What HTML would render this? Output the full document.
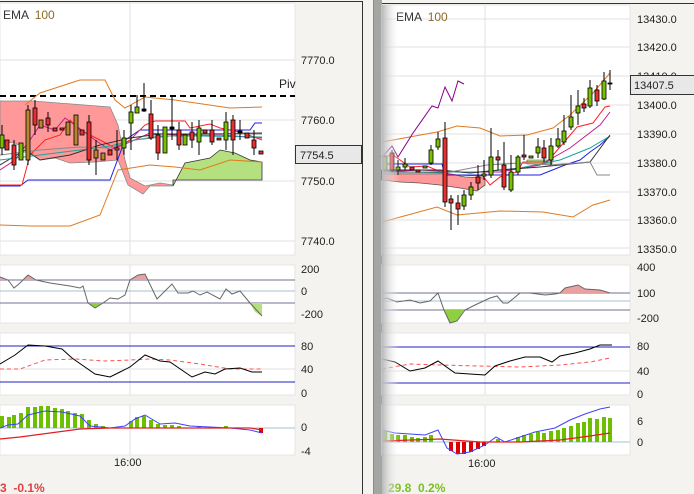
<!DOCTYPE html>
<html><head><meta charset="utf-8"><style>
html,body{margin:0;padding:0;width:694px;height:494px;overflow:hidden;background:#f4f3f0}
svg{display:block;font-family:"Liberation Sans",sans-serif}
</style></head><body>
<svg width="694" height="494" viewBox="0 0 694 494" xmlns="http://www.w3.org/2000/svg">
<defs>
<linearGradient id="sh" x1="0" x2="1" y1="0" y2="0">
<stop offset="0" stop-color="#b8b8b8"/><stop offset="1" stop-color="#ffffff" stop-opacity="0"/>
</linearGradient>
</defs>
<rect x="0" y="0" width="694" height="494" fill="#f4f3f0"/>
<!-- LEFT PANEL -->
<line x1="0" y1="1.5" x2="363" y2="1.5" stroke="#333"/>
<line x1="362.5" y1="1" x2="362.5" y2="494" stroke="#333"/>
<rect x="0" y="3" width="295" height="252" fill="#fff" stroke="#e4e4e4"/>
<g stroke="#e2e2e2"><line x1="0" y1="60" x2="295" y2="60"/><line x1="0" y1="120" x2="295" y2="120"/><line x1="0" y1="181" x2="295" y2="181"/><line x1="0" y1="241" x2="295" y2="241"/><line x1="130" y1="3" x2="130" y2="255"/></g>
<text x="3" y="19" font-size="12" fill="#333">EMA <tspan fill="#8a6a2a" dx="3">100</tspan></text>
<g font-size="11" fill="#222"><text x="301" y="64">7770.0</text><text x="301" y="124">7760.0</text><text x="301" y="185">7750.0</text><text x="301" y="245">7740.0</text><text x="279" y="88" font-size="12">Piv</text></g>
<rect x="295.5" y="145.5" width="66" height="18" fill="#e8e8e8" stroke="#333"/>
<text x="300" y="159" font-size="11" fill="#222">7754.5</text>
<!-- clouds -->
<polygon points="0,101 33,101 110,107 118,125 125,160 130,178 145,186 160,183 173,185 172,186 150,186 143,194 128,185 118,160 95,162 70,163 55,158 40,160 28,150 15,143 0,142" fill="#f99" stroke="#888" stroke-width="0.8"/>
<polygon points="173,186 185,163 210,158 220,150 235,153 250,160 262,162 262,180 173,180" fill="#b5e080" stroke="#333" stroke-width="0.8"/>
<line x1="0" y1="96" x2="295" y2="96" stroke="#000" stroke-width="2" stroke-dasharray="6,4"/>
<g fill="none" stroke-width="1">
<polyline stroke="#e07a20" points="25,105 40,93 80,80 105,80 115,100 125,108 145,97 175,100 230,108 262,107"/>
<polyline stroke="#e07a20" points="0,225 30,226 70,226 100,215 110,190 118,170 150,165 175,167 200,170 230,160 262,162"/>
<polyline stroke="#2020e0" points="0,186 20,186 28,180 110,180 125,140 140,130 250,130 255,123 262,123"/>
<polyline stroke="#ff2020" points="0,185 22,185 30,155 45,140 60,135 70,120 80,130 100,140 115,148 130,140 145,125 155,121 185,121 190,128 210,124 220,128 240,132 262,140"/>
<polyline stroke="#c02090" points="0,170 15,160 30,140 40,125 55,130 65,118 75,125 95,140 110,150 130,142 150,133 175,135 220,135 262,138"/>
<polyline stroke="#333" points="0,165 25,150 40,160 70,155 100,145 130,138 160,134 200,134 262,133"/>
<polyline stroke="#20a0a0" points="0,160 40,155 80,150 110,146 135,140 160,136 200,136 262,137"/>
<polyline stroke="#888" points="0,155 40,150 80,147 110,148 135,140 170,136 220,134 262,134"/>
</g>
<g stroke="#000" stroke-width="1">
<path d="M2,125V155M14,140V170M28,105V165M35,100V135M48,112V132M89,115V165M96,140V175M117,130V160M124,130V155M131,105V150M137,95V112M144,83V112M151,100V140M158,125V160M172,95V140M179,122V150M192,122V148M199,120V155M212,120V145M226,112V150M233,115V155M240,120V140M254,130V155"/>
</g>
<g stroke="#000" stroke-width="0.8">
<rect x="0" y="135" width="4" height="13" fill="#7ac000"/>
<rect x="5" y="140" width="4" height="10" fill="#e83030"/>
<rect x="12" y="145" width="4" height="20" fill="#e83030"/>
<rect x="19" y="143" width="4" height="17" fill="#7ac000"/>
<rect x="26" y="110" width="4" height="50" fill="#b8862c"/>
<rect x="33" y="108" width="4" height="17" fill="#e83030"/>
<rect x="39" y="120" width="4" height="8" fill="#b8862c"/>
<rect x="46" y="118" width="4" height="7" fill="#e83030"/>
<rect x="53" y="128" width="4" height="3" fill="#e83030"/>
<rect x="60" y="128" width="4" height="2" fill="#e83030"/>
<rect x="66" y="122" width="4" height="13" fill="#b8862c"/>
<rect x="74" y="115" width="4" height="30" fill="#b8862c"/>
<rect x="80" y="130" width="4" height="5" fill="#e83030"/>
<rect x="87" y="122" width="4" height="38" fill="#e83030"/>
<rect x="94" y="150" width="4" height="8" fill="#b8862c"/>
<rect x="101" y="153" width="4" height="7" fill="#b8862c"/>
<rect x="108" y="150" width="4" height="5" fill="#e83030"/>
<rect x="115" y="148" width="4" height="2" fill="#b8862c"/>
<rect x="122" y="138" width="4" height="10" fill="#7ac000"/>
<rect x="129" y="112" width="4" height="11" fill="#7ac000"/>
<rect x="135" y="107" width="4" height="6" fill="#7ac000"/>
<rect x="142" y="109" width="4" height="2" fill="#000"/>
<rect x="149" y="114" width="4" height="24" fill="#e83030"/>
<rect x="156" y="135" width="4" height="18" fill="#e83030"/>
<rect x="163" y="127" width="4" height="26" fill="#7ac000"/>
<rect x="170" y="127" width="4" height="2" fill="#000"/>
<rect x="177" y="130" width="4" height="15" fill="#e83030"/>
<rect x="183" y="135" width="4" height="10" fill="#7ac000"/>
<rect x="190" y="132" width="4" height="8" fill="#e83030"/>
<rect x="197" y="128" width="4" height="14" fill="#7ac000"/>
<rect x="203" y="130" width="4" height="3" fill="#e83030"/>
<rect x="210" y="130" width="4" height="12" fill="#e83030"/>
<rect x="217" y="138" width="4" height="2" fill="#e83030"/>
<rect x="224" y="122" width="4" height="18" fill="#7ac000"/>
<rect x="231" y="120" width="4" height="20" fill="#e83030"/>
<rect x="238" y="131" width="4" height="2" fill="#000"/>
<rect x="245" y="133" width="4" height="5" fill="#e83030"/>
<rect x="252" y="140" width="4" height="8" fill="#e83030"/>
<rect x="259" y="151" width="4" height="3" fill="#e83030"/>
</g>
<!-- left sub1 -->
<rect x="0" y="265" width="295" height="58" fill="#fff" stroke="#e4e4e4"/>
<line x1="130" y1="265" x2="130" y2="323" stroke="#e2e2e2"/>
<line x1="0" y1="280" x2="295" y2="280" stroke="#707090"/>
<line x1="0" y1="291" x2="295" y2="291" stroke="#a8c0d0"/>
<line x1="0" y1="303" x2="295" y2="303" stroke="#707090"/>
<polygon points="0,277 8,280 0,280" fill="#e8a0a0"/><polygon points="22,280 28,275 36,280" fill="#e8a0a0"/>
<polygon points="130,280 138,275 145,274 148,280" fill="#e8a0a0"/>
<polygon points="88,303 95,308 103,303" fill="#8fd040"/>
<polygon points="250,303 262,303 262,316 255,312" fill="#b5e080"/>
<polyline fill="none" stroke="#666" points="0,277 8,280 14,288 20,283 28,275 36,280 50,283 70,286 80,288 83,286 88,303 95,308 103,303 110,298 118,299 125,295 130,280 138,275 145,274 157,299 172,284 178,293 188,293 193,291 200,295 207,292 220,299 226,289 232,294 240,291 250,303 262,316"/>
<g font-size="11" fill="#222"><text x="301" y="273">200</text><text x="301" y="295">0</text><text x="301" y="318">-200</text></g>
<!-- left sub2 -->
<rect x="0" y="333" width="295" height="62" fill="#fff" stroke="#e4e4e4"/>
<line x1="130" y1="333" x2="130" y2="395" stroke="#e2e2e2"/>
<line x1="0" y1="369" x2="295" y2="369" stroke="#e0e0e0"/>
<line x1="0" y1="346" x2="295" y2="346" stroke="#2020c0"/>
<line x1="0" y1="382" x2="295" y2="382" stroke="#2020c0"/>
<polyline fill="none" stroke="#ff5050" stroke-dasharray="4,3" points="0,369 20,369 45,360 75,359 105,361 130,360 150,359 170,360 200,364 230,369 262,369"/>
<polyline fill="none" stroke="#000" points="0,364 10,358 15,355 28,345 45,346 62,349 72,358 95,374 110,377 120,372 130,367 145,355 160,361 170,362 192,377 205,372 215,374 225,369 240,368 252,372 262,372"/>
<g font-size="11" fill="#222"><text x="301" y="350">80</text><text x="301" y="373">40</text><text x="301" y="397">0</text></g>
<!-- left sub3 -->
<rect x="0" y="405" width="295" height="50" fill="#fff" stroke="#e4e4e4"/>
<line x1="130" y1="405" x2="130" y2="455" stroke="#e2e2e2"/>
<line x1="0" y1="428" x2="295" y2="428" stroke="#a8c0d0"/>
<g fill="#6cc000">
<rect x="0" y="416" width="4" height="12"/><rect x="7" y="417" width="4" height="11"/><rect x="12" y="415" width="4" height="13"/><rect x="19" y="413" width="4" height="15"/><rect x="26" y="407" width="4" height="21"/><rect x="33" y="407" width="4" height="21"/><rect x="39" y="406" width="4" height="22"/><rect x="46" y="406" width="4" height="22"/><rect x="53" y="408" width="4" height="20"/><rect x="60" y="409" width="4" height="19"/><rect x="66" y="411" width="4" height="17"/><rect x="73" y="413" width="4" height="15"/><rect x="80" y="414" width="4" height="14"/><rect x="87" y="420" width="4" height="8"/><rect x="94" y="424" width="4" height="4"/><rect x="101" y="426" width="4" height="2"/><rect x="129" y="421" width="4" height="7"/><rect x="135" y="417" width="4" height="11"/><rect x="142" y="416" width="4" height="12"/><rect x="149" y="420" width="4" height="8"/><rect x="156" y="424" width="4" height="4"/><rect x="163" y="425" width="4" height="3"/><rect x="170" y="425" width="4" height="3"/><rect x="177" y="426" width="4" height="2"/><rect x="197" y="426" width="4" height="2"/><rect x="224" y="426" width="4" height="2"/>
</g>
<rect x="259" y="428" width="4" height="5" fill="#d00"/>
<polyline fill="none" stroke="#4040ff" points="0,428 8,425 18,424 28,415 45,411 62,412 80,416 90,426 110,428 125,426 135,419 145,415 160,424 175,423 190,426 230,428 250,430 262,433"/>
<polyline fill="none" stroke="#e02020" stroke-width="1.2" points="0,439 20,437 50,433 80,429 110,428 200,428 250,428 262,430"/>
<g font-size="11" fill="#222"><text x="301" y="431">0</text><text x="301" y="455">-4</text><text x="114" y="466">16:00</text></g>
<text x="0" y="492" font-size="12" font-weight="bold" fill="#e04040">3 &#160;-0.1%</text>
<!-- middle strip -->
<rect x="373" y="0" width="9" height="494" fill="#a4a6a4"/>
<line x1="373.5" y1="0" x2="373.5" y2="494" stroke="#8a8c8a"/>
<!-- RIGHT PANEL -->
<line x1="382" y1="3.5" x2="694" y2="3.5" stroke="#333"/>
<rect x="382" y="5" width="248" height="250" fill="#fff" stroke="#e4e4e4"/>
<g stroke="#e2e2e2"><line x1="382" y1="19" x2="630" y2="19"/><line x1="382" y1="47" x2="630" y2="47"/><line x1="382" y1="76" x2="630" y2="76"/><line x1="382" y1="105" x2="630" y2="105"/><line x1="382" y1="134" x2="630" y2="134"/><line x1="382" y1="163" x2="630" y2="163"/><line x1="382" y1="192" x2="630" y2="192"/><line x1="382" y1="220" x2="630" y2="220"/><line x1="382" y1="248" x2="630" y2="248"/><line x1="485" y1="5" x2="485" y2="255"/></g>
<text x="396" y="21" font-size="12" fill="#333">EMA <tspan fill="#8a6a2a" dx="3">100</tspan></text>
<g font-size="11" fill="#222"><text x="637" y="23">13430.0</text><text x="637" y="51">13420.0</text><text x="637" y="80">13410.0</text><text x="637" y="109">13400.0</text><text x="637" y="138">13390.0</text><text x="637" y="167">13380.0</text><text x="637" y="196">13370.0</text><text x="637" y="224">13360.0</text><text x="637" y="253">13350.0</text></g>
<rect x="630.5" y="75.5" width="64" height="19" fill="#e8e8e8" stroke="#333"/>
<text x="634" y="89" font-size="11" fill="#222">13407.5</text>
<polygon points="382,170 410,172 445,173 465,177 485,178 485,185 477,191 460,188 440,185 420,183 400,182 382,180" fill="#f99" stroke="#555" stroke-width="0.8"/>
<polygon points="527,160 552,160 552,164 527,164" fill="#b5e080" stroke="#555" stroke-width="0.6"/>
<g fill="none" stroke-width="1">
<polyline stroke="#e07a20" points="382,142 437,132 457,126 480,128 500,136 527,135 553,128 570,115 593,93 610,73"/>
<polyline stroke="#e07a20" points="382,222 437,207 457,215 500,211 543,212 573,217 593,205 610,200"/>
<polyline stroke="#880088" points="382,157 392,146 398,157 413,133 432,106 438,108 445,87 452,101 458,81 464,84"/>
<polyline stroke="#ff2020" points="382,157 393,155 410,167 427,166 443,173 457,175 483,176 490,185 500,177 517,172 523,162 547,162 560,147 577,127 593,123 605,107 610,106"/>
<polyline stroke="#2020e0" points="382,164 442,164 445,175 540,175 565,165 580,160 590,152 600,145 610,136"/>
<polyline stroke="#c02090" points="382,172 420,170 460,172 500,172 540,165 570,148 600,125 610,112"/>
<polyline stroke="#20a0a0" points="382,172 430,172 480,172 520,168 560,160 590,148 610,136"/>
<polyline stroke="#333" points="382,170 440,170 470,173 500,170 540,167 570,164 590,162 610,135"/>
<polyline stroke="#888" points="382,174 440,174 487,165 520,163 550,165 590,162 597,175 610,175"/>
</g>
<g stroke="#000" stroke-width="1">
<path d="M385,155V172M392,150V172M398,160V175M405,158V170M431,145V165M438,132V150M445,122V207M451,195V230M458,195V225M464,190V210M471,182V200M478,165V190M484,160V180M491,128V178M498,150V170M504,142V190M511,155V192M518,155V175M524,135V160M538,138V158M544,140V162M551,138V165M558,128V148M564,115V145M571,95V130M578,90V125M584,98V112M590,80V108M597,85V106M604,72V100M610,70V90"/>
</g>
<g stroke="#000" stroke-width="0.8">
<rect x="383" y="157" width="4" height="13" fill="#7ac000"/><rect x="390" y="153" width="4" height="17" fill="#e83030"/><rect x="396" y="167" width="4" height="3" fill="#7ac000"/><rect x="403" y="164" width="4" height="3" fill="#7ac000"/><rect x="410" y="167" width="4" height="3" fill="#e83030"/><rect x="416" y="170" width="4" height="2" fill="#e83030"/><rect x="423" y="166" width="4" height="2" fill="#7ac000"/><rect x="429" y="150" width="4" height="13" fill="#7ac000"/><rect x="436" y="139" width="4" height="8" fill="#7ac000"/><rect x="443" y="138" width="4" height="64" fill="#e83030"/><rect x="449" y="199" width="4" height="4" fill="#e83030"/><rect x="456" y="203" width="4" height="6" fill="#e83030"/><rect x="462" y="195" width="4" height="11" fill="#7ac000"/><rect x="469" y="187" width="4" height="8" fill="#7ac000"/><rect x="476" y="177" width="4" height="6" fill="#e83030"/><rect x="482" y="174" width="4" height="2" fill="#7ac000"/><rect x="489" y="157" width="4" height="18" fill="#7ac000"/><rect x="496" y="157" width="4" height="3" fill="#e83030"/><rect x="502" y="165" width="4" height="22" fill="#e83030"/><rect x="509" y="172" width="4" height="18" fill="#7ac000"/><rect x="516" y="157" width="4" height="15" fill="#7ac000"/><rect x="522" y="155" width="4" height="2" fill="#e83030"/><rect x="529" y="156" width="4" height="2" fill="#7ac000"/><rect x="536" y="147" width="4" height="6" fill="#7ac000"/><rect x="542" y="148" width="4" height="10" fill="#e83030"/><rect x="549" y="146" width="4" height="14" fill="#7ac000"/><rect x="556" y="139" width="4" height="7" fill="#7ac000"/><rect x="562" y="131" width="4" height="11" fill="#7ac000"/><rect x="569" y="117" width="4" height="10" fill="#7ac000"/><rect x="576" y="106" width="4" height="7" fill="#7ac000"/><rect x="582" y="104" width="4" height="4" fill="#e83030"/><rect x="588" y="88" width="4" height="18" fill="#7ac000"/><rect x="595" y="90" width="4" height="11" fill="#e83030"/><rect x="602" y="81" width="4" height="18" fill="#7ac000"/><rect x="608" y="83" width="4" height="1" fill="#000"/>
</g>
<!-- right sub1 -->
<rect x="382" y="265" width="248" height="58" fill="#fff" stroke="#e4e4e4"/>
<line x1="485" y1="265" x2="485" y2="323" stroke="#e2e2e2"/>
<line x1="382" y1="293" x2="630" y2="293" stroke="#707090"/>
<line x1="382" y1="301" x2="630" y2="301" stroke="#a8c0d0"/>
<line x1="382" y1="310" x2="630" y2="310" stroke="#707090"/>
<polygon points="444,310 450,323 457,321 464,310" fill="#8fd040"/>
<polygon points="560,293 565,288 578,285 585,289 600,290 610,293" fill="#e8a0a0"/>
<polyline fill="none" stroke="#666" points="382,299 387,298 397,302 410,300 420,303 430,301 438,293 444,310 450,323 457,321 465,310 475,305 490,298 497,296 503,303 508,303 520,293 530,293 545,295 555,294 560,293 565,288 578,285 585,289 600,290 610,293"/>
<g font-size="11" fill="#222"><text x="637" y="271">400</text><text x="637" y="297">100</text><text x="637" y="322">-200</text></g>
<!-- right sub2 -->
<rect x="382" y="333" width="248" height="62" fill="#fff" stroke="#e4e4e4"/>
<line x1="485" y1="333" x2="485" y2="395" stroke="#e2e2e2"/>
<line x1="382" y1="371" x2="630" y2="371" stroke="#e0e0e0"/>
<line x1="382" y1="347" x2="630" y2="347" stroke="#2020c0"/>
<line x1="382" y1="383" x2="630" y2="383" stroke="#2020c0"/>
<polyline fill="none" stroke="#ff5050" stroke-dasharray="4,3" points="382,369 410,364 440,365 480,366 520,367 560,365 590,362 610,358"/>
<polyline fill="none" stroke="#000" points="382,359 395,362 410,371 425,368 438,361 455,373 470,374 485,375 495,366 510,361 525,357 540,357 552,362 560,356 575,353 590,349 600,345 612,345"/>
<g font-size="11" fill="#222"><text x="637" y="350">80</text><text x="637" y="375">40</text><text x="637" y="398">0</text></g>
<!-- right sub3 -->
<rect x="382" y="405" width="248" height="50" fill="#fff" stroke="#e4e4e4"/>
<line x1="485" y1="405" x2="485" y2="455" stroke="#e2e2e2"/>
<line x1="382" y1="442" x2="630" y2="442" stroke="#a8c0d0"/>
<g fill="#6cc000">
<rect x="383" y="431" width="4" height="11"/><rect x="390" y="434" width="4" height="8"/><rect x="396" y="435" width="4" height="7"/><rect x="403" y="435" width="4" height="7"/><rect x="410" y="437" width="4" height="5"/><rect x="416" y="438" width="4" height="4"/><rect x="423" y="437" width="4" height="5"/><rect x="429" y="435" width="4" height="7"/><rect x="496" y="439" width="4" height="3"/><rect x="516" y="437" width="4" height="5"/><rect x="522" y="435" width="4" height="7"/><rect x="529" y="434" width="4" height="8"/><rect x="536" y="432" width="4" height="10"/><rect x="542" y="433" width="4" height="9"/><rect x="549" y="431" width="4" height="11"/><rect x="556" y="430" width="4" height="12"/><rect x="562" y="428" width="4" height="14"/><rect x="569" y="426" width="4" height="16"/><rect x="576" y="423" width="4" height="19"/><rect x="582" y="422" width="4" height="20"/><rect x="588" y="418" width="4" height="24"/><rect x="595" y="419" width="4" height="23"/><rect x="602" y="417" width="4" height="25"/><rect x="608" y="418" width="4" height="24"/>
</g>
<g fill="#d00"><rect x="449" y="442" width="4" height="9"/><rect x="456" y="442" width="4" height="12"/><rect x="462" y="442" width="4" height="12"/><rect x="469" y="442" width="4" height="10"/><rect x="476" y="442" width="4" height="7"/><rect x="482" y="442" width="4" height="4"/></g>
<polyline fill="none" stroke="#4040ff" points="382,430 395,433 410,434 425,435 438,430 447,448 457,454 470,452 485,445 496,437 505,442 520,437 535,432 555,428 570,420 585,414 600,409 610,407"/>
<polyline fill="none" stroke="#e02020" stroke-width="1.2" points="382,441 440,439 480,442 520,442 560,440 590,436 610,433"/>
<g font-size="11" fill="#222"><text x="637" y="425">6</text><text x="637" y="446">0</text><text x="468" y="467">16:00</text></g>
<text x="388" y="492" font-size="12" font-weight="bold" fill="#7ac020">29.8 &#160;0.2%</text>
<rect x="382" y="5" width="18" height="489" fill="url(#sh)"/>
</svg>
</body></html>
